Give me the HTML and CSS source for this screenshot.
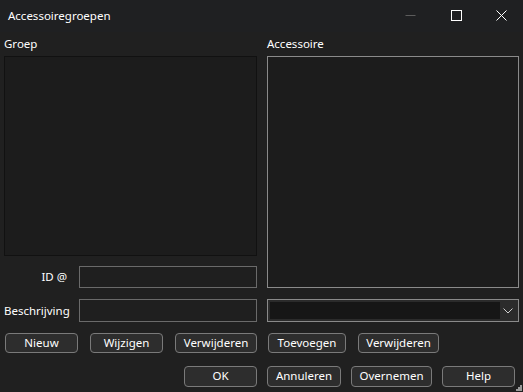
FILE: index.html
```html
<!DOCTYPE html>
<html>
<head>
<meta charset="utf-8">
<link rel="stylesheet" href="styles.css">
</head>
<body>
<div class="window">
  <div class="titlebar">
    <span class="title">Accessoiregroepen</span>
    <div class="controls">
      <span class="ctl ctl-min"><svg width="11" height="11" viewBox="0 0 11 11"><path d="M0.5 5.5H10.5" stroke="#5c5c5c" stroke-width="1"/></svg></span>
      <span class="ctl ctl-max"><svg width="11" height="11" viewBox="0 0 11 11"><rect x="0.5" y="0.5" width="10" height="10" fill="none" stroke="#ffffff" stroke-width="1"/></svg></span>
      <span class="ctl ctl-close"><svg width="11" height="11" viewBox="0 0 11 11"><path d="M0.5 0.5L10.5 10.5M10.5 0.5L0.5 10.5" stroke="#ffffff" stroke-width="1"/></svg></span>
    </div>
  </div>
  <div class="body">
    <div class="label label-groep">Groep</div>
    <div class="label label-acc">Accessoire</div>
    <div class="list list-groep"></div>
    <div class="list list-acc"></div>
    <div class="field-row row-id">
      <span class="flabel flabel-right">ID @</span>
      <span class="input"></span>
    </div>
    <div class="field-row row-desc">
      <span class="flabel">Beschrijving</span>
      <span class="input"></span>
    </div>
    <div class="combo">
      <span class="combo-inner"></span>
      <span class="combo-arrow"><svg width="10" height="6" viewBox="0 0 10 6"><path d="M0.5 0.5L5 5L9.5 0.5" fill="none" stroke="#cfcfcf" stroke-width="1"/></svg></span>
    </div>
    <div class="btnrow btnrow-left">
      <button class="btn w73">Nieuw</button>
      <button class="btn w73">Wijzigen</button>
      <button class="btn w82">Verwijderen</button>
    </div>
    <div class="btnrow btnrow-right">
      <button class="btn w78">Toevoegen</button>
      <button class="btn w81">Verwijderen</button>
    </div>
    <div class="btnrow btnrow-ok">
      <button class="btn w73 tall">OK</button>
    </div>
    <div class="btnrow btnrow-main">
      <button class="btn w74 tall">Annuleren</button>
      <button class="btn w81 tall">Overnemen</button>
      <button class="btn w73 tall">Help</button>
    </div>
  </div>
  <div class="grip">
    <i class="g1"></i><i class="g2"></i><i class="g3"></i><i class="g4"></i><i class="g5"></i><i class="g6"></i>
  </div>
</div>
</body>
</html>
```
FILE: styles.css
```css
html, body {
  margin: 0;
  padding: 0;
  background: #202020;
}
body {
  width: 523px;
  height: 392px;
  overflow: hidden;
  font-family: "Noto Sans", "Open Sans", sans-serif;
  font-size: 11.5px;
  color: #ffffff;
}
.window {
  position: relative;
  width: 523px;
  height: 392px;
  background: #202020;
}
.titlebar {
  height: 32px;
  display: flex;
  align-items: center;
  justify-content: space-between;
  background: #1f2022;
}
.title {
  padding-left: 8px;
  padding-bottom: 1px;
  font-size: 11.5px;
  color: #ffffff;
}
.controls {
  display: flex;
  height: 32px;
}
.ctl {
  width: 46px;
  height: 32px;
  display: flex;
  align-items: center;
  justify-content: center;
}
.ctl svg { display: block; margin-top: -2px; }
.ctl-close { width: 44px; }

.body {
  display: grid;
  grid-template-columns: 253px 252px;
  grid-template-rows: 24px 200px 32px 34px 31px 34px;
  column-gap: 10px;
  padding-left: 4px;
}
.label {
  display: flex;
  align-items: center;
  padding-bottom: 1px;
  color: #ffffff;
}
.label-groep { grid-column: 1; grid-row: 1; }
.label-acc { grid-column: 2; grid-row: 1; }

.list {
  box-sizing: border-box;
  background: #1c1c1c;
}
.list-groep {
  grid-column: 1;
  grid-row: 2;
  border: 1px solid #111111;
}
.list-acc {
  grid-column: 2;
  grid-row: 2 / span 2;
  border: 1px solid #8a8a8a;
}

.field-row {
  display: flex;
  align-items: center;
  align-self: end;
  height: 23px;
}
.row-id { grid-column: 1; grid-row: 3; height: 22px; }
.row-desc { grid-column: 1; grid-row: 4; }
.flabel {
  width: 75px;
  flex: none;
  color: #ffffff;
  padding-bottom: 1px;
}
.flabel-right {
  width: 63px;
  margin-right: 12px;
  text-align: right;
}
.input {
  box-sizing: border-box;
  width: 178px;
  height: 100%;
  border: 1px solid #6a6a6a;
  background: #1f1f1f;
}

.combo {
  grid-column: 2;
  grid-row: 4;
  align-self: end;
  box-sizing: border-box;
  height: 23px;
  border: 1px solid #8a8a8a;
  background: #2b2b2b;
  display: flex;
  align-items: stretch;
  padding: 2px;
}
.combo-inner {
  width: 230px;
  background: #161616;
}
.combo-arrow {
  flex: 1;
  display: flex;
  align-items: center;
  justify-content: center;
  padding-top: 1px;
}

.btnrow {
  display: flex;
  align-self: end;
}
.btnrow-left {
  grid-column: 1;
  grid-row: 5;
  justify-content: space-between;
  padding-left: 1px;
}
.btnrow-right {
  grid-column: 2;
  grid-row: 5;
  gap: 12px;
  padding-left: 1px;
}
.btnrow-ok {
  grid-column: 1;
  grid-row: 6;
  justify-content: flex-end;
}
.btnrow-main {
  grid-column: 2;
  grid-row: 6;
  gap: 10px;
}
.btn {
  box-sizing: border-box;
  height: 20px;
  padding: 0 0 1px 0;
  margin: 0;
  border: 1px solid #7a7a7a;
  border-radius: 4px;
  background: #2d2d2d;
  color: #ffffff;
  font-family: "Noto Sans", "Open Sans", sans-serif;
  font-size: 11.5px;
  line-height: 16px;
}
.btn.tall { height: 21px; }
.w73 { width: 73px; }
.w74 { width: 74px; }
.w78 { width: 78px; }
.w81 { width: 81px; }
.w82 { width: 82px; }

.grip {
  position: absolute;
  right: 1px;
  bottom: 1px;
  width: 6px;
  height: 6px;
}
.grip i {
  position: absolute;
  width: 2px;
  height: 2px;
  background: #9a9a9a;
}
.grip .g1 { right: 0; bottom: 0; }
.grip .g2 { right: 2px; bottom: 0; }
.grip .g3 { right: 4px; bottom: 0; }
.grip .g4 { right: 0; bottom: 2px; }
.grip .g5 { right: 2px; bottom: 2px; }
.grip .g6 { right: 0; bottom: 4px; }
```
